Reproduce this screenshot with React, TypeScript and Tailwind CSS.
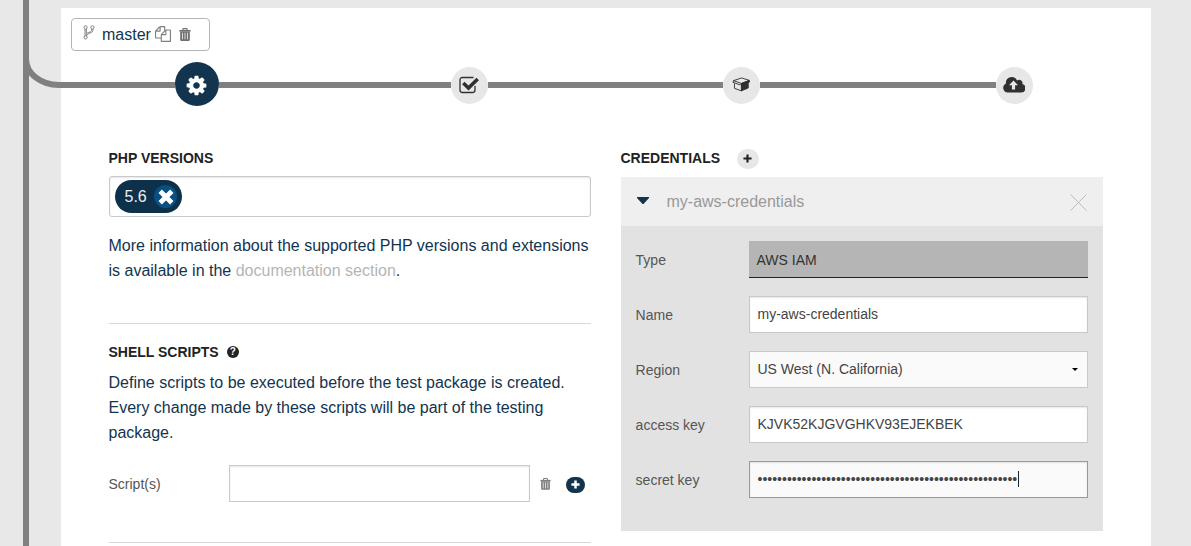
import type { ReactNode } from "react";

const FILES =
  "M1696 384q40 0 68 28t28 68v1216q0 40-28 68t-68 28h-960q-40 0-68-28t-28-68v-288h-544q-40 0-68-28t-28-68v-672q0-40 20-88t48-76l408-408q28-28 76-48t88-20h416q40 0 68 28t28 68v328q68-40 128-40h416zm-544 213l-299 299h299v-299zm-640-384l-299 299h299v-299zm196 647l316-316v-416h-384v416q0 40-28 68t-68 28h-416v640h512v-256q0-40 20-88t48-76zm956 804v-1152h-384v416q0 40-28 68t-68 28h-416v640h896z";
const COG =
  "M1152 896q0-106-75-181t-181-75-181 75-75 181 75 181 181 75 181-75 75-181zm512-109v222q0 12-8 23t-20 13l-185 28q-19 54-39 91 35 50 107 138 10 12 10 25t-9 23q-27 37-99 108t-94 71q-12 0-26-9l-138-108q-44 23-91 38-16 136-29 186-7 28-36 28h-222q-14 0-24.5-8.5t-11.5-21.5l-28-184q-49-16-90-37l-141 107q-10 9-25 9-14 0-25-11-126-114-165-168-7-10-7-23 0-12 8-23 15-21 51-66.5t54-70.5q-27-50-41-99l-183-27q-13-2-21-12.5t-8-23.5v-222q0-12 8-23t19-13l186-28q14-46 39-92-40-57-107-138-10-12-10-24 0-10 9-23 26-36 98.5-107.5t94.5-71.5q13 0 26 10l138 107q44-23 91-38 16-136 29-186 7-28 36-28h222q14 0 24.5 8.5t11.5 21.5l28 184q49 16 90 37l142-107q9-9 24-9 13 0 25 10 129 119 165 170 7 8 7 22 0 12-8 23-15 21-51 66.5t-54 70.5q26 50 41 98l183 28q13 2 21 12.5t8 23.5z";

function Trash({ className }: { className: string }) {
  return (
    <svg viewBox="0 0 12 13" className={className} fill="none">
      <path d="M3.800 2V1.400q0-.8.800-.8h2.800q.8 0 .8.800V2" stroke="currentColor" strokeWidth="1.100" />
      <path d="M.4 2h11.200v1.600H.4z" fill="currentColor" />
      <path d="M1.200 3.400h9.600v8.300q0 1.200-1.200 1.200H2.400q-1.200 0-1.200-1.200z" fill="currentColor" />
      <path d="M3.500 4.700v6.600M6 4.700v6.600M8.500 4.700v6.600" stroke="#fff" strokeWidth="1" opacity=".75" />
    </svg>
  );
}

function Branch() {
  return (
    <svg viewBox="0 0 12 15" className="mt-[-4px] h-[15px] w-3 shrink-0 text-[#808080]" fill="none" stroke="currentColor" strokeWidth="1">
      <circle cx="2.600" cy="2.400" r="1.600" />
      <circle cx="9.400" cy="2.400" r="1.600" />
      <circle cx="2.600" cy="12.400" r="1.600" />
      <path d="M2 4v6.900M3.300 4v4.400M8.900 4c0 2-.7 2.600-2.400 3.200S3.300 8.300 3.300 9.200V10.900M10 4c0 2.700-1 3.300-3 4S3.900 9.600 3.500 10.900" />
    </svg>
  );
}

function Step({ children }: { children: ReactNode }) {
  return (
    <div className="mt-[5px] flex size-[37px] shrink-0 items-center justify-center rounded-full bg-[#e7e7e7] text-[#303030]">
      {children}
    </div>
  );
}

function Stepper() {
  return (
    <div className="mt-[11px] flex h-11 items-start">
      <div className="mt-5 h-1.5 w-[114px] shrink-0 bg-[#808080]" />
      <div className="flex size-11 shrink-0 items-center justify-center rounded-full bg-[#12344f]">
        <svg viewBox="0 0 1792 1792" className="mt-[2px] mr-px size-[23px]" fill="#fff">
          <path d={COG} />
        </svg>
      </div>
      <div className="mt-5 h-1.5 w-[232px] shrink-0 bg-[#808080]" />
      <Step>
        <svg viewBox="0 0 20 18" className="mr-px mb-px h-[18px] w-5" fill="none" stroke="currentColor">
          <path d="M14.500 1.500H3.500q-2.500 0-2.500 2.500v10q0 2.500 2.500 2.500h10q2.500 0 2.500-2.500v-4" strokeWidth="1.300" />
          <path d="M4.300 7l5.200 5 9.200-9" strokeWidth="3.600" />
        </svg>
      </Step>
      <div className="mt-5 h-1.5 w-[235px] shrink-0 bg-[#808080]" />
      <Step>
        <svg viewBox="0 0 20 16" className="mb-[2px] h-[14.500px] w-[18.500px]" fill="none" stroke="currentColor" strokeWidth="1" strokeLinejoin="round">
          <path d="M1.500 4l9-3 8.500 2.800-8.500 3.400z" />
          <path d="M1.500 4L.8 5.800l7.700 2.900L10.200 7M2.500 7v5.500l7.700 2.800V7.500" />
          <path d="M10.200 7.200l7.500-2.700v7.600L10.200 15.300z" fill="currentColor" />
          <path d="M10.200 7.200l1.100 1.300 7.900-3-.5-1.700z" fill="currentColor" />
        </svg>
      </Step>
      <div className="mt-5 h-1.5 w-[236px] shrink-0 bg-[#808080]" />
      <Step>
        <svg viewBox="0 0 22 17" className="mr-px mb-[2px] h-[17px] w-[22px]">
          <path d="M4.800 16.500A4.800 4.800 0 0 1 2.900 7.400 5.800 5.800 0 0 1 14 4.600a3.300 3.300 0 0 1 5.400 3.300A4.400 4.400 0 0 1 17.800 16.500z" fill="currentColor" />
          <path d="M10.500 4.600l4.500 4.700h-2.900v4.300H8.900V9.300H6z" fill="#e7e7e7" />
        </svg>
      </Step>
    </div>
  );
}

const inputBase =
  "flex h-[37px] w-[339px] items-center border px-2 pb-px text-[14px] text-[#444]";

function Field({ label, children }: { label: string; children: ReactNode }) {
  return (
    <div className="flex h-[37px] items-center">
      <span className="w-[113.500px] shrink-0 pt-[2px] pl-[0.600px] text-[14px] text-[#555]">{label}</span>
      {children}
    </div>
  );
}

function Credentials() {
  return (
    <section className="w-[482px]">
      <div className="flex h-5 items-center">
        <h2 className="text-[14px] font-bold text-[#222]">CREDENTIALS</h2>
        <button className="mt-px ml-[16.500px] flex h-5 w-[22px] items-center justify-center rounded-full bg-[#e7e7e7]">
          <svg viewBox="0 0 10 10" className="size-[9px]" stroke="#222" strokeWidth="2.400">
            <path d="M5 .5v9M.5 5h9" />
          </svg>
        </button>
      </div>
      <div className="mt-[9px] flex h-[49px] items-center bg-[#efefef] pr-4 pl-4">
        <svg viewBox="0 0 12 7" className="mb-[3px] h-[7px] w-3" fill="#12344f">
          <path d="M0 0h12v1L6.500 7h-1L0 1z" />
        </svg>
        <span className="ml-[18px] flex-1 text-[16px] text-[#999]">my-aws-credentials</span>
        <svg viewBox="0 0 17 17" className="mt-px size-[17px]" stroke="#bbb" strokeWidth="1">
          <path d="M.5 .5l16 16M16.500 .5l-16 16" />
        </svg>
      </div>
      <div className="flex h-[305px] flex-col gap-[18px] bg-[#e2e2e2] px-[14.500px] pt-[15px]">
        <Field label="Type">
          <div className="flex h-[37px] w-[339px] items-center border-b border-[#222] bg-[#b5b5b5] pt-[3px] pl-2 text-[14px] text-[#333]">
            AWS IAM
          </div>
        </Field>
        <Field label="Name">
          <div className={`${inputBase} border-[#c9c9c9] bg-white shadow-[inset_0_1px_2px_rgba(0,0,0,0.1)]`}>my-aws-credentials</div>
        </Field>
        <Field label="Region">
          <div className={`${inputBase} justify-between border-[#c9c9c9] bg-[#fafafa]`}>
            US West (N. California)
            <svg viewBox="0 0 6 3" className="mt-px mr-px h-[3px] w-1.5">
              <path d="M0 0h6L3 3z" />
            </svg>
          </div>
        </Field>
        <Field label="access key">
          <div className={`${inputBase} border-[#c9c9c9] bg-white shadow-[inset_0_1px_2px_rgba(0,0,0,0.1)]`}>KJVK52KJGVGHKV93EJEKBEK</div>
        </Field>
        <Field label="secret key">
          <div className={`${inputBase} border-[#999] bg-[#fafafa] shadow-[inset_0_1px_2px_rgba(0,0,0,0.1)]`}>
            {"•".repeat(53)}
            <span className="ml-[0.500px] h-4 w-px bg-[#222]" />
          </div>
        </Field>
      </div>
    </section>
  );
}

function Scripts() {
  return (
    <section className="w-[482px]">
      <h2 className="flex h-5 items-center text-[14px] font-bold text-[#222]">PHP VERSIONS</h2>
      <div className="mt-2 flex h-[41px] items-start rounded-[3px] border border-[#c9c9c9] pt-[3px] pl-[5px] shadow-[inset_0_1px_2px_rgba(0,0,0,0.1)]">
        <div className="flex h-[33px] w-[67px] items-center rounded-full bg-[#0d304b] pl-[10px] text-[16px] text-[#eee]">
          5.6
          <span className="ml-[7.500px] flex size-[23px] items-center justify-center rounded-full bg-[#075080]">
            <svg viewBox="0 0 16 16" className="size-4" stroke="#fff" strokeWidth="4.800">
              <path d="M2.200 2.200l11.600 11.600M13.800 2.200L2.200 13.800" />
            </svg>
          </span>
        </div>
      </div>
      <p className="mt-4 text-[16px] leading-[25px] whitespace-nowrap text-[#12344f]">
        More information about the supported PHP versions and extensions
        <br />
        is available in the <a className="text-[#b5b5b5]">documentation section</a>.
      </p>
      <hr className="mt-10 border-[#d8d8d8]" />
      <h2 className="mt-[18px] flex h-5 items-center text-[14px] font-bold text-[#222]">
        SHELL SCRIPTS
        <span className="ml-2 flex size-3 items-center justify-center rounded-full bg-[#222] text-[10px] leading-none text-white">?</span>
      </h2>
      <p className="mt-2 text-[16px] leading-[25px] text-[#12344f]">
        Define scripts to be executed before the test package is created.
        <br />
        Every change made by these scripts will be part of the testing
        <br />
        package.
      </p>
      <div className="mt-5 flex h-[37px] items-center">
        <span className="w-[120px] pt-[2px] text-[14px] text-[#555]">Script(s)</span>
        <input className="h-[37px] w-[301px] border border-[#c9c9c9] bg-white shadow-[inset_0_1px_2px_rgba(0,0,0,0.1)]" />
        <Trash className="ml-[10px] h-3 w-[11px] text-[#808080]" />
        <button className="mt-[2px] ml-[15px] flex h-4 w-[19px] items-center justify-center rounded-full bg-[#12344f]">
          <svg viewBox="0 0 10 10" className="size-[9px]" stroke="#fff" strokeWidth="2.800">
            <path d="M5 .5v9M.5 5h9" />
          </svg>
        </button>
      </div>
      <hr className="mt-10 border-[#d8d8d8]" />
    </section>
  );
}

export default function App() {
  return (
    <div className="flex h-[546px] w-[1191px] overflow-hidden bg-[#e8e8e8] font-['Liberation_Sans',Arial,sans-serif]">
      <div className="ml-[23px] w-1.5 shrink-0 bg-[#808080]" />
      <svg viewBox="29 0 32 100" className="h-[100px] w-8 shrink-0" fill="none" stroke="#808080" strokeWidth="6">
        <path d="M26 59A33 26 0 0 0 59 85h3" />
      </svg>
      <main className="mt-2 w-[1090px] shrink-0 bg-white pt-[10px]">
        <div className="ml-[10px] flex h-[33px] w-[139px] items-center rounded border border-[#b5b5b5] pl-[11px]">
          <Branch />
          <span className="ml-[7px] text-[16px] text-[#12344f]">master</span>
          <svg viewBox="0 0 1792 1792" className="mb-px ml-1 size-4" fill="#808080">
            <path d={FILES} />
          </svg>
          <Trash className="ml-2 h-[13px] w-3 text-[#707070]" />
        </div>
        <Stepper />
        <div className="mt-[42px] flex gap-[30px] pl-[47.500px]">
          <Scripts />
          <Credentials />
        </div>
      </main>
    </div>
  );
}
